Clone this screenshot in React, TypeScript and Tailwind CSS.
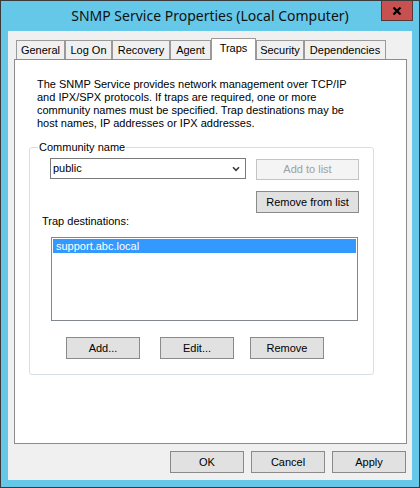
import React from "react";

const tabs = [
  { label: "General", w: "w-[49px]" },
  { label: "Log On", w: "w-[47px]" },
  { label: "Recovery", w: "w-[58px]" },
  { label: "Agent", w: "w-[41px]" },
  { label: "Traps", w: "w-[45px]", active: true },
  { label: "Security", w: "w-[48px]" },
  { label: "Dependencies", w: "w-[82px]" },
];

function Btn({ children, className = "" }: { children: React.ReactNode; className?: string }) {
  return (
    <button
      type="button"
      className={`h-[22px] w-[74px] shrink-0 border border-[#8a8a8a] bg-[#e1e1e1] leading-[20px] text-black ${className}`}
    >
      {children}
    </button>
  );
}

export default function App() {
  return (
    <div className="flex h-[488px] w-[420px] flex-col border border-[#3a3a3a] bg-[#65c8e9] font-['Liberation_Sans',Arial,sans-serif] text-[11px] text-black">
      {/* title bar */}
      <div className="relative flex h-[30px] shrink-0 items-center justify-center">
        <span className="font-['Noto_Sans',sans-serif] text-[14px] leading-[20px] text-[#111]">
          SNMP Service Properties (Local Computer)
        </span>
        <div className="absolute right-[6px] top-0 flex h-[20px] w-[32px] items-center justify-center border border-t-0 border-[#5b3434] bg-[#c75050]">
          <svg width="10" height="8" viewBox="0 0 10 8">
            <path d="M1.5 0.5 L8.5 7.5 M8.5 0.5 L1.5 7.5" stroke="#000" strokeWidth="2.2" />
          </svg>
        </div>
      </div>

      {/* client area */}
      <div className="mx-[7px] mb-[7px] flex flex-1 flex-col bg-[#f0f0f0] pl-[6px] pr-[5px] pt-[7px]">
        {/* tab strip */}
        <div className="flex h-[21px] items-end pl-[2px]">
          {tabs.map((t) =>
            t.active ? (
              <div
                key={t.label}
                className={`relative z-10 -mb-px flex h-[22px] ${t.w} justify-center border border-b-0 border-[#9a9a9a] bg-white pt-[3px] leading-[13px]`}
              >
                {t.label}
              </div>
            ) : (
              <div
                key={t.label}
                className={`flex h-[19px] ${t.w} justify-center border border-b-0 border-[#9a9a9a] bg-[#f0f0f0] pt-[3px] leading-[13px]`}
              >
                {t.label}
              </div>
            )
          )}
        </div>

        {/* tab page */}
        <div className="flex h-[385px] w-[393px] flex-col border border-[#8c8c8c] bg-white">
          <p className="ml-[22px] mt-[18px] leading-[13px]">
            The SNMP Service provides network management over TCP/IP
            <br />
            and IPX/SPX protocols. If traps are required, one or more
            <br />
            community names must be specified. Trap destinations may be
            <br />
            host names, IP addresses or IPX addresses.
          </p>

          {/* group box */}
          <div className="relative ml-[14px] mt-[17px] flex h-[228px] w-[345px] flex-col rounded-[3px] border border-[#d5dfe5]">
            <span className="absolute left-[8px] top-[-7px] bg-white px-[1px] leading-[13px]">Community name</span>

            <div className="ml-[20px] mt-[10px] flex h-[22px] items-start">
              <div className="flex h-[21px] w-[196px] items-center justify-between border border-[#7a7a7a] bg-white pl-[2px] pr-[5px]">
                <span className="leading-[13px]">public</span>
                <svg width="8" height="6" viewBox="0 0 8 6">
                  <path d="M1 1.2 L4 4.4 L7 1.2" fill="none" stroke="#3c3c3c" strokeWidth="1.6" />
                </svg>
              </div>
              <button
                type="button"
                className="ml-[10px] mt-[1px] h-[21px] w-[103px] border border-[#c4c4c4] bg-[#f4f4f4] leading-[19px] text-[#a0a0a0]"
              >
                Add to list
              </button>
            </div>

            <button
              type="button"
              className="ml-[226px] mt-[11px] h-[22px] w-[103px] border border-[#8a8a8a] bg-[#e1e1e1] leading-[20px]"
            >
              Remove from list
            </button>

            <span className="ml-[12px] mt-[2px] leading-[13px]">Trap destinations:</span>

            <div className="ml-[21px] mt-[9px] h-[84px] w-[307px] border border-[#828790] bg-white">
              <div className="m-px h-[14px] bg-[#3399ff] pl-[3px] leading-[14px] text-white">support.abc.local</div>
            </div>

            <div className="mt-[16px] flex">
              <Btn className="ml-[36px]">Add...</Btn>
              <Btn className="ml-[20px]">Edit...</Btn>
              <Btn className="ml-[16px]">Remove</Btn>
            </div>
          </div>
        </div>

        {/* dialog buttons */}
        <div className="mt-[7px] flex justify-end gap-[7px] pr-[1px]">
          <Btn className="border-[#3c7fb1]">OK</Btn>
          <Btn>Cancel</Btn>
          <Btn>Apply</Btn>
        </div>
      </div>
    </div>
  );
}
